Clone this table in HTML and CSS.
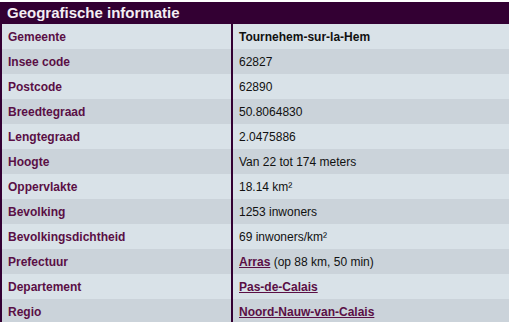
FILE: index.html
```html
<!DOCTYPE html>
<html>
<head>
<meta charset="utf-8">
<link rel="stylesheet" href="styles.css">
</head>
<body>
<div class="box">
  <div class="head">Geografische informatie</div>
  <table class="info">
    <tr class="a"><th>Gemeente</th><td><b>Tournehem-sur-la-Hem</b></td></tr>
    <tr class="b"><th>Insee code</th><td>62827</td></tr>
    <tr class="a"><th>Postcode</th><td>62890</td></tr>
    <tr class="b"><th>Breedtegraad</th><td>50.8064830</td></tr>
    <tr class="a"><th>Lengtegraad</th><td>2.0475886</td></tr>
    <tr class="b"><th>Hoogte</th><td>Van 22 tot 174 meters</td></tr>
    <tr class="a"><th>Oppervlakte</th><td>18.14 km²</td></tr>
    <tr class="b"><th>Bevolking</th><td>1253 inwoners</td></tr>
    <tr class="a"><th>Bevolkingsdichtheid</th><td>69 inwoners/km²</td></tr>
    <tr class="b"><th>Prefectuur</th><td><a href="#">Arras</a> (op 88 km, 50 min)</td></tr>
    <tr class="a"><th>Departement</th><td><a href="#">Pas-de-Calais</a></td></tr>
    <tr class="b"><th>Regio</th><td><a href="#">Noord-Nauw-van-Calais</a></td></tr>
  </table>
</div>
</body>
</html>
```
FILE: styles.css
```css
html, body { margin: 0; padding: 0; background: #ffffff; }
body { font-family: "Liberation Sans", Arial, sans-serif; font-size: 12px; color: #111111; }
.box { margin-top: 2px; border-left: 2px solid #330033; width: 509px; }
.head { background: #330033; color: #f4eef4; font-weight: bold; font-size: 15px; height: 22px; line-height: 22px; padding-left: 5px; }
.info { border-collapse: collapse; width: 507px; }
.info th, .info td { height: 25px; padding: 0 0 0 6px; text-align: left; vertical-align: middle; box-sizing: border-box; }
.info th { width: 230px; color: #5a0f45; font-weight: bold; border-right: 2px solid #330033; }
.info td { color: #111111; padding-left: 6px; }
.info tr.a { background: #d9e2e8; }
.info tr.b { background: #cbd3da; }
.info a { color: #5a0f45; font-weight: bold; text-decoration: underline; }
```
